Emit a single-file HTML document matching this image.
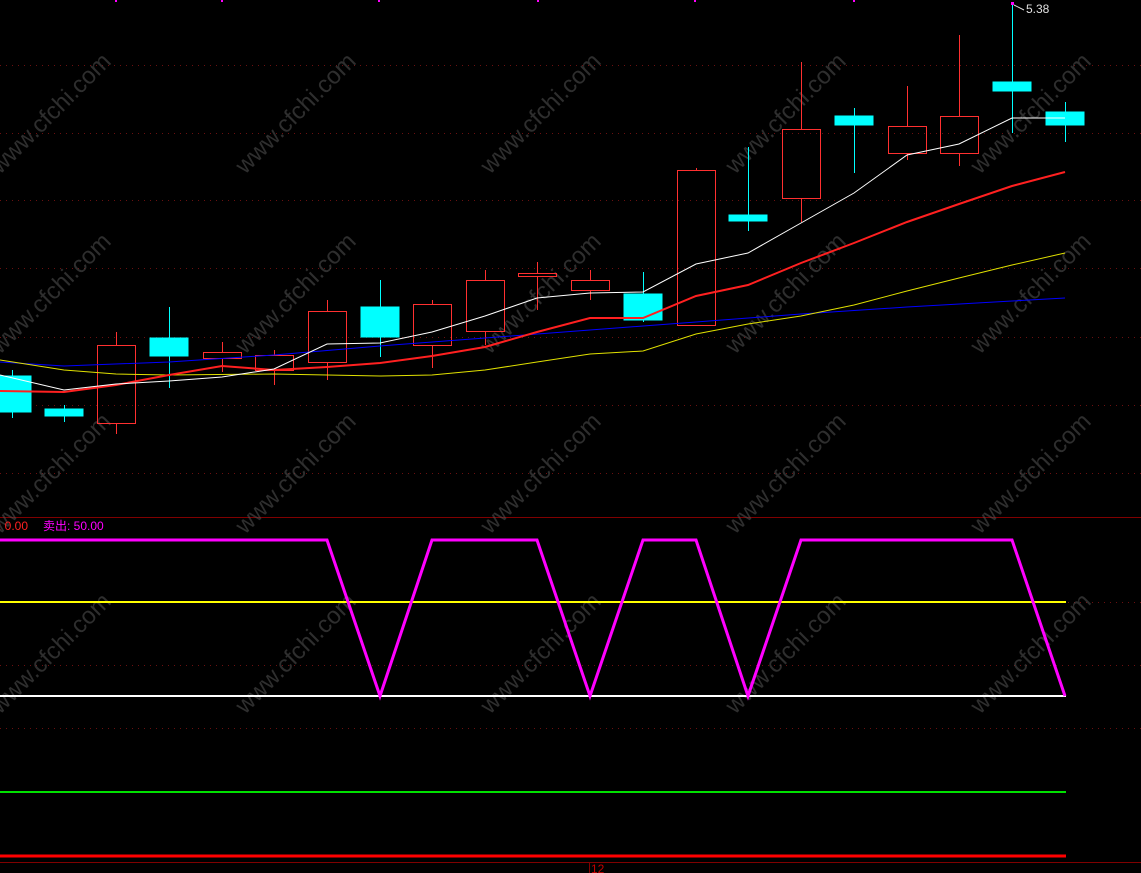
<!DOCTYPE html>
<html><head><meta charset="utf-8"><style>
html,body{margin:0;padding:0;background:#000;width:1141px;height:873px;overflow:hidden}
svg{display:block}
text{font-family:"Liberation Sans","Noto Sans CJK SC",sans-serif}
</style></head><body>
<svg width="1141" height="873" viewBox="0 0 1141 873" xmlns="http://www.w3.org/2000/svg">
<g stroke="#6a1010" stroke-dasharray="1,5" stroke-width="1">
<line x1="0" y1="65.5" x2="1141" y2="65.5"/><line x1="0" y1="133.5" x2="1141" y2="133.5"/>
<line x1="0" y1="200.5" x2="1141" y2="200.5"/><line x1="0" y1="268.5" x2="1141" y2="268.5"/>
<line x1="0" y1="337.5" x2="1141" y2="337.5"/><line x1="0" y1="405.5" x2="1141" y2="405.5"/>
<line x1="0" y1="473.5" x2="1141" y2="473.5"/>
<line x1="0" y1="602.5" x2="1141" y2="602.5"/><line x1="0" y1="665.5" x2="1141" y2="665.5"/>
<line x1="0" y1="728.5" x2="1141" y2="728.5"/>
</g>
<line x1="0" y1="517.5" x2="1141" y2="517.5" stroke="#800000"/>
<line x1="0" y1="862.5" x2="1141" y2="862.5" stroke="#800000"/>
<line x1="589.5" y1="862" x2="589.5" y2="873" stroke="#800000"/>
<text x="591" y="873" fill="#c00000" font-size="12">12</text>
<g fill="#555" font-size="24" opacity="0.55">
<text transform="translate(0,175) rotate(-45)">www.cfchi.com</text>
<text transform="translate(245,175) rotate(-45)">www.cfchi.com</text>
<text transform="translate(490,175) rotate(-45)">www.cfchi.com</text>
<text transform="translate(735,175) rotate(-45)">www.cfchi.com</text>
<text transform="translate(980,175) rotate(-45)">www.cfchi.com</text>
<text transform="translate(0,355) rotate(-45)">www.cfchi.com</text>
<text transform="translate(245,355) rotate(-45)">www.cfchi.com</text>
<text transform="translate(490,355) rotate(-45)">www.cfchi.com</text>
<text transform="translate(735,355) rotate(-45)">www.cfchi.com</text>
<text transform="translate(980,355) rotate(-45)">www.cfchi.com</text>
<text transform="translate(0,535) rotate(-45)">www.cfchi.com</text>
<text transform="translate(245,535) rotate(-45)">www.cfchi.com</text>
<text transform="translate(490,535) rotate(-45)">www.cfchi.com</text>
<text transform="translate(735,535) rotate(-45)">www.cfchi.com</text>
<text transform="translate(980,535) rotate(-45)">www.cfchi.com</text>
<text transform="translate(0,715) rotate(-45)">www.cfchi.com</text>
<text transform="translate(245,715) rotate(-45)">www.cfchi.com</text>
<text transform="translate(490,715) rotate(-45)">www.cfchi.com</text>
<text transform="translate(735,715) rotate(-45)">www.cfchi.com</text>
<text transform="translate(980,715) rotate(-45)">www.cfchi.com</text>
</g>
<g stroke-width="1">
<g stroke="#00ffff" fill="#00ffff">
<line x1="12.5" y1="370" x2="12.5" y2="418"/><rect x="-7" y="376" width="38" height="36"/>
<line x1="64.5" y1="405" x2="64.5" y2="422"/><rect x="45" y="409" width="38" height="7"/>
<line x1="169.5" y1="307" x2="169.5" y2="388"/><rect x="150" y="338" width="38" height="18"/>
<line x1="380.5" y1="280" x2="380.5" y2="357"/><rect x="361" y="307" width="38" height="30"/>
<line x1="643.5" y1="272" x2="643.5" y2="322"/><rect x="624" y="294" width="38" height="26"/>
<line x1="748.5" y1="147" x2="748.5" y2="231"/><rect x="729" y="215" width="38" height="6"/>
<line x1="854.5" y1="108" x2="854.5" y2="173"/><rect x="835" y="116" width="38" height="9"/>
<line x1="1012.5" y1="3" x2="1012.5" y2="133"/><rect x="993" y="82" width="38" height="9"/>
<line x1="1065.5" y1="102" x2="1065.5" y2="142"/><rect x="1046" y="112" width="38" height="13"/>
</g>
<g stroke="#ff3030" fill="none">
<line x1="116.5" y1="332" x2="116.5" y2="345"/><line x1="116.5" y1="424" x2="116.5" y2="434"/><rect x="97.5" y="345.5" width="38" height="78"/>
<line x1="222.5" y1="342" x2="222.5" y2="352"/><line x1="222.5" y1="359" x2="222.5" y2="372"/><rect x="203.5" y="352.5" width="38" height="6"/>
<line x1="274.5" y1="350" x2="274.5" y2="355"/><line x1="274.5" y1="371" x2="274.5" y2="385"/><rect x="255.5" y="355.5" width="38" height="15"/>
<line x1="327.5" y1="300" x2="327.5" y2="311"/><line x1="327.5" y1="363" x2="327.5" y2="380"/><rect x="308.5" y="311.5" width="38" height="51"/>
<line x1="432.5" y1="300" x2="432.5" y2="304"/><line x1="432.5" y1="346" x2="432.5" y2="368"/><rect x="413.5" y="304.5" width="38" height="41"/>
<line x1="485.5" y1="270" x2="485.5" y2="280"/><line x1="485.5" y1="332" x2="485.5" y2="345"/><rect x="466.5" y="280.5" width="38" height="51"/>
<line x1="537.5" y1="262" x2="537.5" y2="273"/><line x1="537.5" y1="277" x2="537.5" y2="310"/><rect x="518.5" y="273.5" width="38" height="3"/>
<line x1="590.5" y1="270" x2="590.5" y2="280"/><line x1="590.5" y1="291" x2="590.5" y2="300"/><rect x="571.5" y="280.5" width="38" height="10"/>
<line x1="696.5" y1="168" x2="696.5" y2="170"/><rect x="677.5" y="170.5" width="38" height="155"/>
<line x1="801.5" y1="62" x2="801.5" y2="129"/><line x1="801.5" y1="199" x2="801.5" y2="222"/><rect x="782.5" y="129.5" width="38" height="69"/>
<line x1="907.5" y1="86" x2="907.5" y2="126"/><line x1="907.5" y1="154" x2="907.5" y2="160"/><rect x="888.5" y="126.5" width="38" height="27"/>
<line x1="959.5" y1="35" x2="959.5" y2="116"/><line x1="959.5" y1="154" x2="959.5" y2="166"/><rect x="940.5" y="116.5" width="38" height="37"/>
</g>
</g>
<polyline fill="none" stroke="#0000ff" stroke-width="1" points="0,362 64,366 169,362 274,355 380,346 485,338 590,330 696,322 801,314 907,307 1012,301 1065,298"/>
<polyline fill="none" stroke="#e0e000" stroke-width="1" points="0,360 64,370 116,374 169,375 274,374 380,376 432,375 485,370 537,362 590,354 643,351 696,334 748,324 801,316 854,305 907,291 959,278 1012,265 1065,253"/>
<polyline fill="none" stroke="#ff2020" stroke-width="2" points="0,391 64,392 116,385 169,375 222,366 274,370 327,367 380,363 432,356 485,347 537,332 590,318 643,318 696,296 748,285 801,263 854,243 907,222 959,204 1012,186 1065,172"/>
<polyline fill="none" stroke="#ffffff" stroke-width="1" points="0,375 64,390 116,384 169,381 222,377 274,369 327,344 380,343 432,332 485,316 537,298 590,293 643,292 696,264 748,253 801,223 854,193 907,155 959,144 1012,118 1040,118 1065,118"/>
<text x="1026" y="13" fill="#e0e0e0" font-size="12">5.38</text>
<polyline fill="none" stroke="#e0e0e0" points="1014,5 1024,10"/>
<line x1="0" y1="602" x2="1066" y2="602" stroke="#ffff00" stroke-width="2"/>
<line x1="0" y1="696" x2="1066" y2="696" stroke="#ffffff" stroke-width="2"/>
<line x1="0" y1="792" x2="1066" y2="792" stroke="#00e000" stroke-width="2"/>
<line x1="0" y1="856" x2="1066" y2="856" stroke="#ff0000" stroke-width="3"/>
<polyline fill="none" stroke="#ff00ff" stroke-width="3" points="0,540 327,540 380,696 432,540 537,540 590,696 643,540 696,540 748,696 801,540 1012,540 1065,696"/>
<text x="-2" y="530" fill="#ff2020" font-size="12">: 0.00</text>
<text x="43" y="530" fill="#ff00ff" font-size="12">卖出: 50.00</text>
<g fill="#ff00ff"><rect x="115" y="0" width="2" height="2"/><rect x="221" y="0" width="2" height="2"/><rect x="378" y="0" width="2" height="2"/><rect x="537" y="0" width="2" height="2"/><rect x="694" y="0" width="2" height="2"/><rect x="853" y="0" width="2" height="2"/><rect x="1011" y="2" width="3" height="3"/></g>
</svg>
</body></html>
